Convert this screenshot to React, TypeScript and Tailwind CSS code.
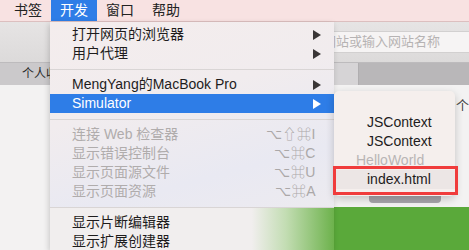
import React from "react";

function Arrow({ white }: { white?: boolean }) {
  return (
    <svg width="8" height="10" viewBox="0 0 8 10" className="shrink-0">
      <polygon points="0,0 8,5 0,10" fill={white ? "#ffffff" : "#3a3636"} />
    </svg>
  );
}

function Row({
  label,
  arrow,
  active,
  disabled,
  shortcut,
}: {
  label: string;
  arrow?: boolean;
  active?: boolean;
  disabled?: boolean;
  shortcut?: string;
}) {
  return (
    <div
      className={`h-[19px] flex items-center pl-[22px] ${arrow ? "pr-[13px]" : "pr-[18px]"} ${
        active ? "bg-[#2e7de7] text-white" : disabled ? "text-[#b0acac]" : "text-[#1e1c1c]"
      }`}
    >
      <span className="flex-1 whitespace-nowrap">{label}</span>
      {arrow && <Arrow white={active} />}
      {shortcut && <span className="text-[#aba8a8] whitespace-nowrap tracking-[0.5px]">{shortcut}</span>}
    </div>
  );
}

function Sep() {
  return (
    <div className="h-[12px] flex items-center">
      <div className="h-[1px] w-full bg-[#d9d5d5]" />
    </div>
  );
}

export default function App() {
  return (
    <div className="relative w-[469px] h-[250px] overflow-hidden bg-[#f3f2f2] font-['Liberation_Sans','Noto_Sans_CJK_SC',sans-serif] flex flex-col">
      {/* menu bar */}
      <div className="h-[22px] shrink-0 bg-[#f8e2e2] border-b border-[#dcbfbf] flex items-stretch text-[14px] text-[#222]">
        <span className="ml-[5px] px-[9px] flex items-center">书签</span>
        <span className="px-[9px] flex items-center bg-[#2e7de7] text-white">开发</span>
        <span className="px-[9px] flex items-center">窗口</span>
        <span className="px-[9px] flex items-center">帮助</span>
      </div>

      {/* toolbar */}
      <div className="h-[40px] shrink-0 bg-[linear-gradient(#e6e4e4,#dcdada)] flex items-start">
        <div className="ml-[120px] mt-[9px] flex-1 h-[22px] bg-[#f6f4f4] rounded-l-[4px] border border-[#d2d0d0] border-r-0 flex items-center pl-[202px] text-[13px] text-[#b6b3b3] whitespace-nowrap overflow-hidden">
          网站或输入网站名称
        </div>
      </div>

      {/* tab bar */}
      <div className="h-[23px] shrink-0 border-t border-[#bdbbbd] flex">
        <div className="w-[334px] bg-[#cbc9cb] flex items-center pl-[22px] text-[12px] text-[#2a2a2a] whitespace-nowrap">
          个人收藏
        </div>
        <div className="w-[25px] bg-[#d6d4d6] border-r border-[#b0aeb0]" />
        <div className="flex-1 bg-[#b9b7b9]" />
      </div>

      {/* content */}
      <div className="flex-1 flex flex-col">
        <div className="flex-1 flex flex-col bg-[#f3f2f2]">
          <div className="pl-[456px] pt-[11px] text-[13px] text-[#444] whitespace-nowrap">个人收藏</div>
          <div className="mt-auto mb-[4px] ml-[369px] w-[72px] h-[10px] bg-[#a7a5ab] rounded-b-[4px]" />
        </div>
        <div className="h-[43px] flex">
          <div className="w-[300px] bg-[#f3f2f2]" />
          <div className="flex-1 bg-[#5aa93a]" />
        </div>
      </div>

      {/* dropdown menu */}
      <div className="absolute left-[50px] top-[22px] w-[284px] h-[228px] pt-[3px] text-[14px] bg-[linear-gradient(165deg,#f4eded_0%,#f1ecee_35%,#e9e9f2_65%,#efecee_100%)] shadow-[-1px_2px_6px_rgba(0,0,0,0.18)]">
        <Row label="打开网页的浏览器" arrow />
        <Row label="用户代理" arrow />
        <Sep />
        <Row label="MengYang的MacBook Pro" arrow />
        <Row label="Simulator" arrow active />
        <Sep />
        <Row label="连接 Web 检查器" disabled shortcut="⌥⇧⌘I" />
        <Row label="显示错误控制台" disabled shortcut="⌥⌘C" />
        <Row label="显示页面源文件" disabled shortcut="⌥⌘U" />
        <Row label="显示页面资源" disabled shortcut="⌥⌘A" />
        <div className="h-[6px]" />
        <div className="border-t border-[#d9d5d5] pt-[5px] h-[50px] bg-[linear-gradient(to_right,#f1eeee_0%,#f1eeee_71%,#c3ddb3_83%,#6db24c_100%)]">
          <Row label="显示片断编辑器" />
          <Row label="显示扩展创建器" />
        </div>
      </div>

      {/* submenu */}
      <div className="absolute left-[334px] top-[91px] w-[121px] h-[105px] pt-[22px] rounded-[5px] bg-[#f5efed] shadow-[0_3px_8px_rgba(0,0,0,0.2)] text-[14px] text-[#1e1c1c]">
        <div className="h-[19px] flex items-center pl-[33px]">JSContext</div>
        <div className="h-[19px] flex items-center pl-[33px]">JSContext</div>
        <div className="h-[19px] flex items-center pl-[22px] text-[#b9b5b5]">HelloWorld</div>
        <div className="h-[19px] flex items-center pl-[33px] bg-[#ece6e5]">index.html</div>
      </div>

      {/* red annotation box */}
      <div className="absolute left-[333px] top-[166px] w-[125px] h-[29px] border-[3px] border-[#f03c3c]" />
    </div>
  );
}
